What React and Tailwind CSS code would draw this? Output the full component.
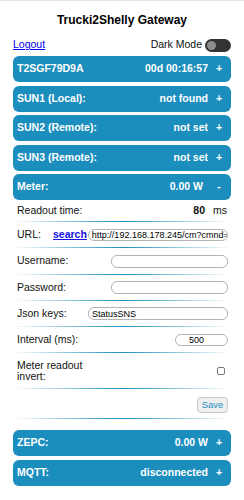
import React from "react";

const bars = [
  { label: "T2SGF79D9A", value: "00d 00:16:57" },
  { label: "SUN1 (Local):", value: "not found" },
  { label: "SUN2 (Remote):", value: "not set" },
  { label: "SUN3 (Remote):", value: "not set" },
];

// HEADER BAR
function Bar({ label, value, sign = "+", gap = "mr-[7px]" }) {
  return (
    <div className="flex h-[26px] items-center justify-between rounded-[6px] bg-[#1b8ebd] pl-[4px] pr-[8px] text-[10.5px] font-bold text-white">
      <span>{label}</span>
      <span className="flex items-center">
        <span className={gap}>{value}</span>
        <span className="w-[8px] text-center">{sign}</span>
      </span>
    </div>
  );
}

function Divider() {
  return (
    <div className="h-px bg-gradient-to-r from-transparent via-[#1b8ebd] to-transparent" />
  );
}

function Field({ className, value = "", textClass = "text-left pl-[3px]" }) {
  return (
    <input
      readOnly
      value={value}
      className={`rounded-[6px] border border-[#b4b4b4] bg-white text-[9px] leading-none text-black outline-none ${textClass} ${className}`}
    />
  );
}

export default function App() {
  return (
    <main className="min-h-screen border-t border-[#e4e4e4] bg-white px-[13px] font-['Liberation_Sans',Arial,sans-serif] text-[10.5px] text-[#111]">
      {/* TITLE */}
      <h1 className="flex h-[37px] items-center justify-center text-[12px] font-bold text-black">
        Trucki2Shelly Gateway
      </h1>

      {/* LOGOUT / DARK MODE */}
      <div className="mb-[4px] flex h-[14px] items-center justify-between">
        <a href="#" className="text-[#0000ee] underline">
          Logout
        </a>
        <div className="flex items-center gap-[3px]">
          <span>Dark Mode</span>
          <span className="flex h-[13px] w-[26px] items-center rounded-full bg-[#333] pl-[2px]">
            <span className="h-[9px] w-[9px] rounded-full bg-[#8c8c8c]" />
          </span>
        </div>
      </div>

      {/* STATUS BARS */}
      <div className="flex flex-col gap-[3.5px]">
        {bars.map((b) => (
          <Bar key={b.label} label={b.label} value={b.value} />
        ))}
        <Bar label="Meter:" value="0.00 W" sign="-" gap="mr-[12px]" />
      </div>

      {/* METER SETTINGS */}
      <div className="px-[4px]">
        <div className="flex h-[21px] items-center justify-between">
          <span>Readout time:</span>
          <span className="flex items-center">
            <b className="mr-[8px]">80</b>
            <span>ms</span>
          </span>
        </div>
      </div>
      <Divider />

      <div className="flex h-[25px] items-center pl-[4px] pr-[3px]">
        <span className="w-[36px]">URL:</span>
        <a href="#" className="mr-px font-bold text-[#1414e6] underline">
          search
        </a>
        <Field
          className="h-[12px] flex-1 min-w-0"
          value="http://192.168.178.245/cm?cmnd=status%2010"
        />
      </div>
      <Divider />

      <div className="flex h-[26px] items-center justify-between pl-[4px] pr-[3px]">
        <span>Username:</span>
        <Field className="h-[13px] w-[117px]" />
      </div>
      <Divider />

      <div className="flex h-[25px] items-center justify-between pl-[4px] pr-[3px]">
        <span>Password:</span>
        <Field className="h-[13px] w-[117px]" />
      </div>
      <Divider />

      <div className="flex h-[25px] items-center justify-between pl-[4px] pr-[3px]">
        <span>Json keys:</span>
        <Field className="h-[13px] w-[140px]" value="StatusSNS" />
      </div>
      <Divider />

      <div className="flex h-[25px] items-center justify-between pl-[4px] pr-[3px]">
        <span>Interval (ms):</span>
        <Field
          className="h-[12px] w-[53px]"
          value="500"
          textClass="text-center pr-[10px]"
        />
      </div>
      <Divider />

      <div className="flex h-[35px] items-center justify-between pl-[4px] pr-[6px]">
        <span className="w-[80px] leading-[11px]">Meter readout invert:</span>
        <span className="h-[8px] w-[8px] rounded-[2px] border border-[#777] bg-white" />
      </div>
      <Divider />

      <div className="flex h-[29px] items-center justify-end pr-[3px]">
        <button className="mt-[2px] h-[16px] w-[31px] rounded-[4px] border border-[#c8c8c8] bg-[#efefef] text-[9.5px] text-[#2a8dc0]">
          Save
        </button>
      </div>
      <Divider />

      {/* OTHER DEVICES */}
      <div className="mt-[11px] flex flex-col gap-[3.5px]">
        <Bar label="ZEPC:" value="0.00 W" />
        <Bar label="MQTT:" value="disconnected" />
      </div>
    </main>
  );
}
